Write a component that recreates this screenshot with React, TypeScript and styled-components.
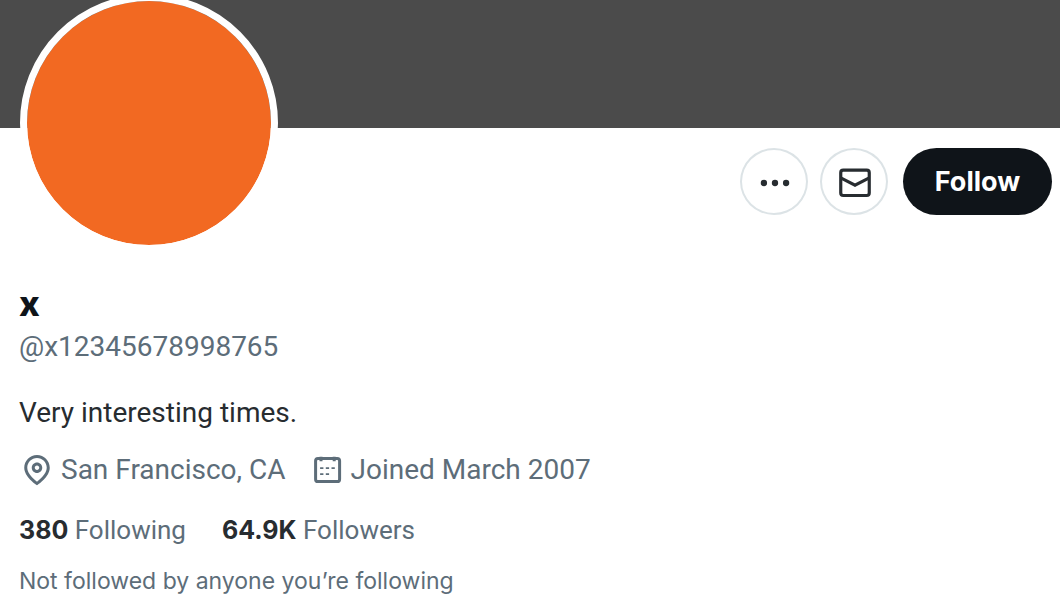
import React from "react";
import styled, { createGlobalStyle } from "styled-components";

const GlobalStyle = createGlobalStyle`
  *, *::before, *::after { box-sizing: border-box; }
  body {
    margin: 0;
    background: #fff;
    color: #0f1419;
    font-family: Roboto, "Liberation Sans", sans-serif;
  }
`;

const Banner = styled.div`
  height: 128px;
  background: #4b4b4b;
`;

const Header = styled.header`
  display: flex;
  justify-content: space-between;
  align-items: flex-start;
  padding: 0 8px 0 20px;
`;

const Avatar = styled.div`
  width: 258px;
  height: 258px;
  margin-top: -134px;
  border: 7px solid #fff;
  border-radius: 50%;
  background: #f26922;
  background-clip: padding-box;
`;

const Actions = styled.div`
  display: flex;
  align-items: center;
  padding-top: 20px;
`;

const IconButton = styled.button`
  display: grid;
  place-items: center;
  width: 68px;
  height: 67px;
  margin-right: 12px;
  padding: 2px 0 0 2px;
  border: 2px solid #dce3e6;
  border-radius: 50%;
  background: #fff;
  color: #272c30;
`;

const FollowButton = styled.button`
  width: 149px;
  height: 67px;
  margin-left: 3px;
  padding: 0;
  border: 0;
  border-radius: 34px;
  background: #0f1419;
  color: #fff;
  font: 700 27px/36px Inter, "Liberation Sans", sans-serif;
`;

const Details = styled.section`
  padding: 32px 19px 0;
`;

const Name = styled.h1`
  margin: 0;
  font-family: Inter, "Liberation Sans", sans-serif;
  font-size: 35px;
  line-height: 38px;
  font-weight: 800;
`;

const Line = styled.p<{ $muted?: boolean; $gap: number }>`
  margin: ${(p) => p.$gap}px 0 0;
  font-size: 28px;
  line-height: 36px;
  color: ${(p) => (p.$muted ? "#5d6d79" : "#272c30")};
`;

const Row = styled.div<{ $gap: number; $top: number }>`
  display: flex;
  flex-wrap: wrap;
  column-gap: ${(p) => p.$gap}px;
  margin-top: ${(p) => p.$top}px;
  color: #5d6d79;
`;

const Meta = styled.span`
  display: flex;
  align-items: center;
  gap: 6px;
  font-size: 28px;
  line-height: 36px;
`;

const Stat = styled.a`
  color: #5d6d79;
  font-size: 26px;
  line-height: 32px;
  text-decoration: none;

  strong {
    color: #272c30;
    font-family: Inter, "Liberation Sans", sans-serif;
    font-size: 25px;
    font-weight: 700;
  }
`;

const Note = styled.p`
  margin: 19px 0 0;
  color: #5d6d79;
  font-family: Inter, "Liberation Sans", sans-serif;
  font-size: 23px;
  line-height: 32px;
`;

const Icon = styled.svg.attrs({ viewBox: "0 0 24 24", "aria-hidden": true })<{ $size: number }>`
  width: ${(p) => p.$size}px;
  height: ${(p) => p.$size}px;
  flex: none;
`;

const MoreIcon = () => (
  <Icon $size={38} fill="currentColor">
    <circle cx="5" cy="12" r="2" />
    <circle cx="12" cy="12" r="2" />
    <circle cx="19" cy="12" r="2" />
  </Icon>
);

const MailIcon = () => (
  <Icon $size={38} fill="none" stroke="currentColor" strokeWidth="2">
    <rect x="3" y="3.9" width="18" height="16" rx="1.6" />
    <path d="M3 8.8l9 4.6 9-4.6" />
  </Icon>
);

const PinIcon = () => (
  <Icon $size={36} fill="currentColor">
    <path d="M12 7c-1.93 0-3.5 1.57-3.5 3.5S10.07 14 12 14s3.5-1.57 3.5-3.5S13.93 7 12 7zm0 5c-.827 0-1.5-.673-1.5-1.5S11.173 9 12 9s1.5.673 1.5 1.5S12.827 12 12 12zm0-10c-4.687 0-8.5 3.813-8.5 8.5 0 5.967 7.621 11.116 7.945 11.332l.555.37.555-.37c.324-.216 7.945-5.365 7.945-11.332C20.5 5.813 16.687 2 12 2zm0 17.77c-1.665-1.241-6.5-5.196-6.5-9.27C5.5 6.916 8.416 4 12 4s6.5 2.916 6.5 6.5c0 4.073-4.835 8.028-6.5 9.27z" />
  </Icon>
);

const CalendarIcon = () => (
  <Icon $size={36} fill="none" stroke="currentColor">
    <rect x="4.4" y="4.3" width="16" height="15.400" rx="1.600" strokeWidth="2" />
    <path d="M8 3.200v3M16.800 3.200v3" strokeWidth="2" />
    <path d="M7.400 10.700h2.200M11.200 10.700h2.200M15 10.700h2.200M7.400 14.700h2.200M11.200 14.700h2.200" strokeWidth="1.200" />
  </Icon>
);

export default function App() {
  return (
    <main>
      <GlobalStyle />
      <Banner />
      <Header>
        <Avatar />
        <Actions>
          <IconButton type="button" aria-label="More">
            <MoreIcon />
          </IconButton>
          <IconButton type="button" aria-label="Message">
            <MailIcon />
          </IconButton>
          <FollowButton type="button">Follow</FollowButton>
        </Actions>
      </Header>
      <Details>
        <Name>x</Name>
        <Line $muted $gap={7}>@x12345678998765</Line>
        <Line $gap={30}>Very interesting times.</Line>
        <Row $gap={23} $top={21}>
          <Meta>
            <PinIcon />
            San Francisco, CA
          </Meta>
          <Meta>
            <CalendarIcon />
            Joined March 2007
          </Meta>
        </Row>
        <Row $gap={36} $top={26}>
          <Stat href="#following">
            <strong>380</strong> Following
          </Stat>
          <Stat href="#followers">
            <strong>64.9K</strong> Followers
          </Stat>
        </Row>
        <Note>Not followed by anyone you’re following</Note>
      </Details>
    </main>
  );
}
